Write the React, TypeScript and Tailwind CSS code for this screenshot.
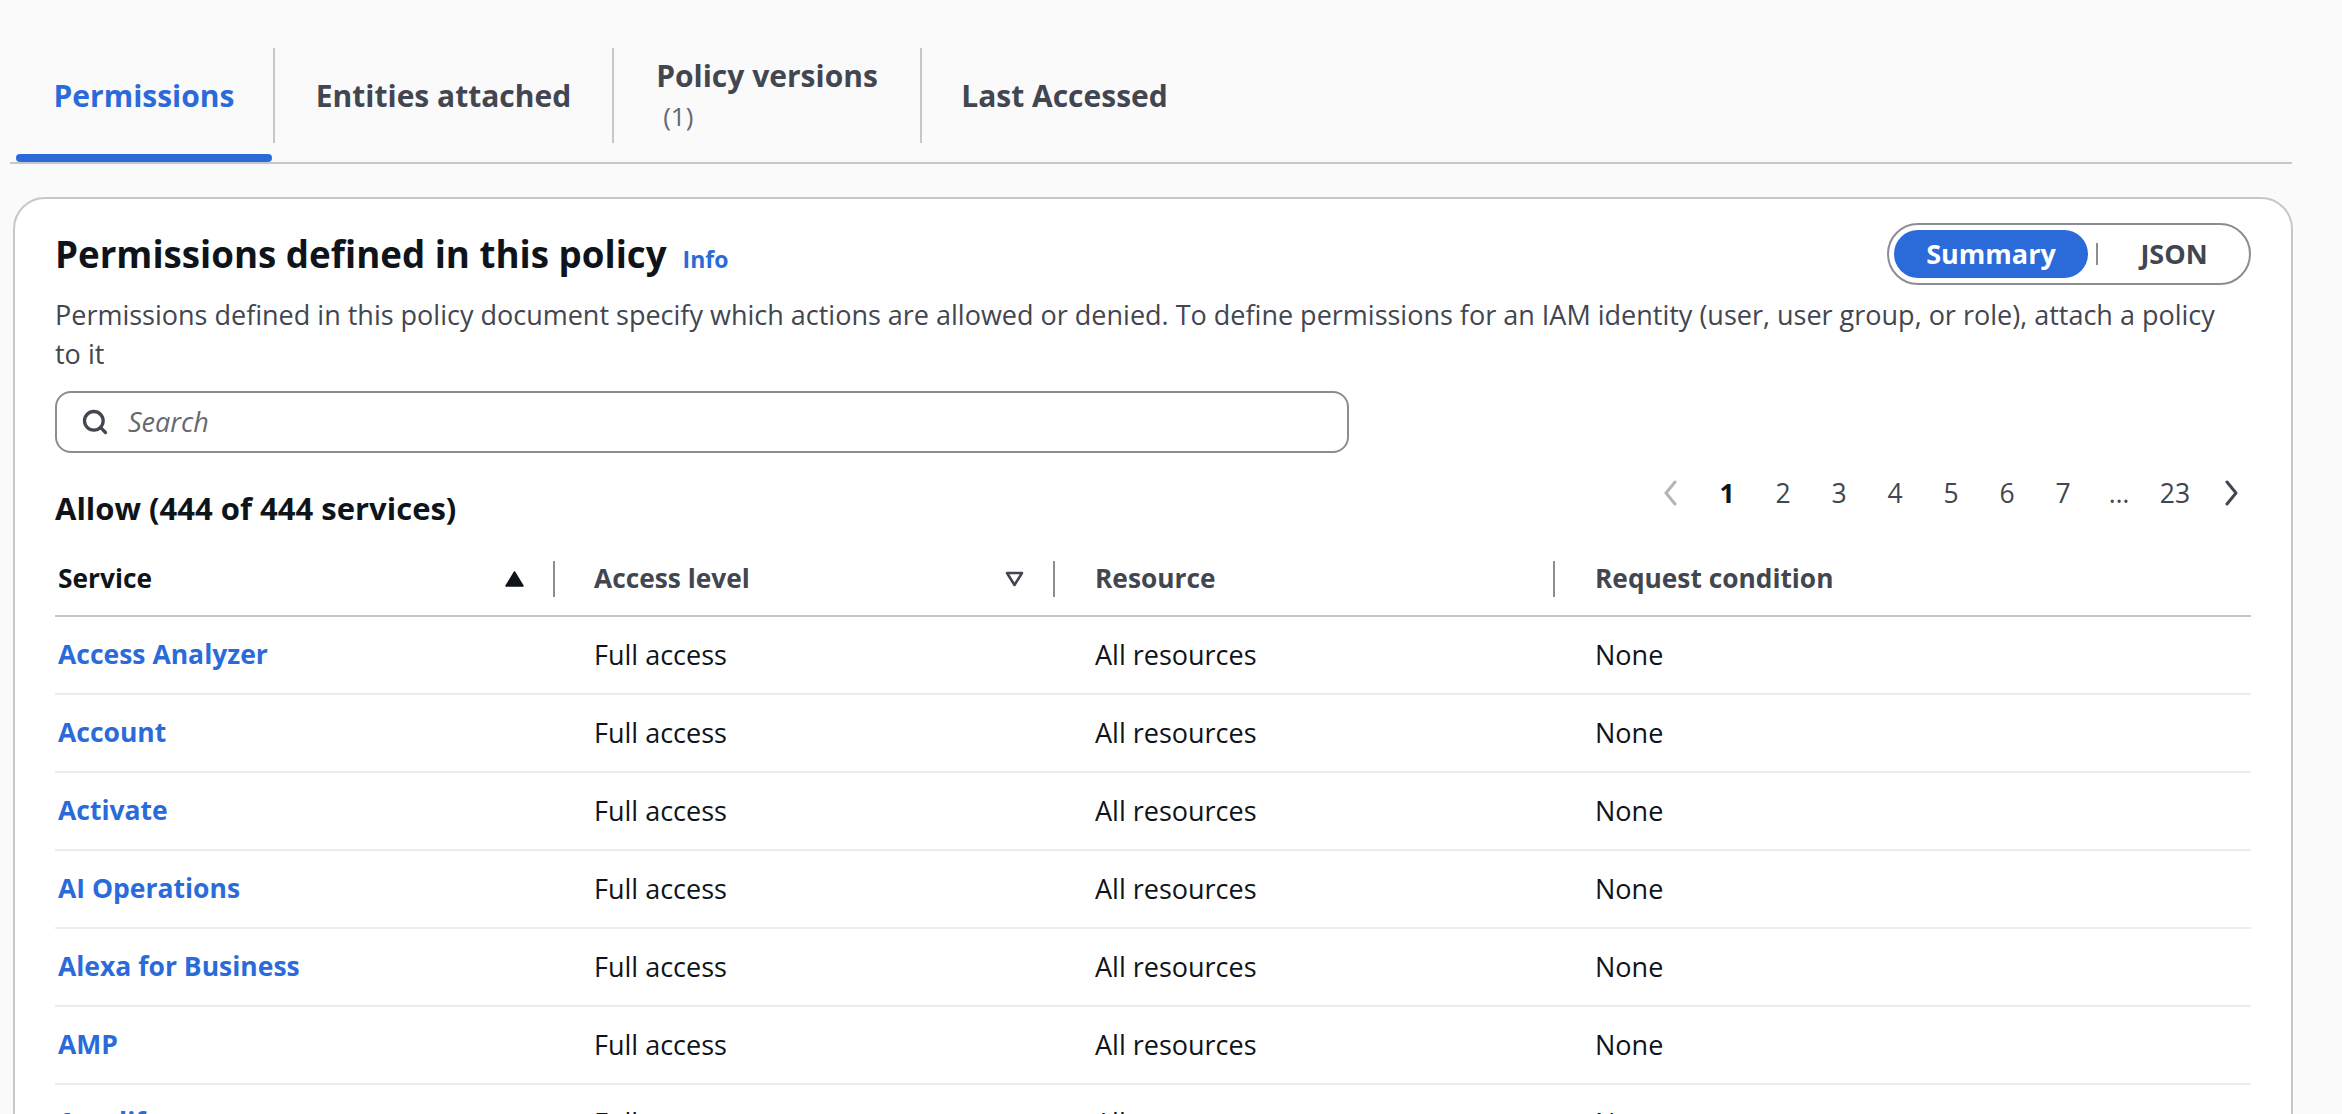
import { Search } from "lucide-react"

const services = [
  "Access Analyzer",
  "Account",
  "Activate",
  "AI Operations",
  "Alexa for Business",
  "AMP",
  "Amplify",
]

function TabDivider() {
  return <div className="w-[2px] h-[95px] bg-[#c6c6cd] self-start" />
}

function Tab({ width, active, children }: { width: string; active?: boolean; children: React.ReactNode }) {
  return (
    <div className={`flex flex-col ${width}`}>
      <div
        className={`h-[95px] flex items-center justify-center text-[30px] font-bold leading-[40px] ${
          active ? "text-[#2b6bd9]" : "text-[#424650]"
        }`}
      >
        {children}
      </div>
      <div className={`mt-[11px] h-[8px] rounded-full mx-[1px] ${active ? "bg-[#2b6bd9]" : ""}`} />
    </div>
  )
}

function SortUp() {
  return (
    <svg width="19" height="16" viewBox="0 0 19 16">
      <polygon points="9.5,1 18,15 1,15" fill="#0f141a" stroke="#0f141a" strokeWidth="1.5" strokeLinejoin="round" />
    </svg>
  )
}

function SortDown() {
  return (
    <svg width="19" height="16" viewBox="0 0 19 16">
      <polygon points="2,2 17,2 9.5,14" fill="none" stroke="#424650" strokeWidth="2.6" strokeLinejoin="round" />
    </svg>
  )
}

function Chevron({ dir, disabled }: { dir: "left" | "right"; disabled?: boolean }) {
  return (
    <svg width="20" height="26" viewBox="0 0 20 26">
      <polyline
        points={dir === "left" ? "14,2 5,13 14,24" : "6,2 15,13 6,24"}
        fill="none"
        stroke={disabled ? "#b4b4bb" : "#424650"}
        strokeWidth="3"
        strokeLinecap="round"
        strokeLinejoin="round"
      />
    </svg>
  )
}

function Pagination() {
  const pages = ["1", "2", "3", "4", "5", "6", "7", "...", "23"]
  return (
    <div className="flex items-center h-[40px] mr-[-8px] text-[26.5px]">
      <div className="w-[56px] flex justify-center">
        <Chevron dir="left" disabled />
      </div>
      {pages.map((p) => (
        <div
          key={p}
          className={`w-[56px] text-center leading-[40px] ${
            p === "1" ? "font-bold text-[#0f141a]" : "text-[#424650]"
          }`}
        >
          {p === "..." ? "…" : p}
        </div>
      ))}
      <div className="w-[56px] flex justify-center">
        <Chevron dir="right" />
      </div>
    </div>
  )
}

export default function App() {
  return (
    <div className="min-h-screen bg-[#fafafa] font-['Open_Sans','Liberation_Sans',sans-serif] pb-[40px]">
      {/* Tabs */}
      <div className="pl-[10px] pr-[50px] pt-[48px]">
        <div className="flex border-b-2 border-[#c6c6cd] pl-[5px]">
          <Tab width="w-[258px]" active>
            Permissions
          </Tab>
          <TabDivider />
          <Tab width="w-[337px]">Entities attached</Tab>
          <TabDivider />
          <Tab width="w-[306px]">
            <div className="flex flex-col">
              <span>Policy versions</span>
              <span className="pl-[7px] font-normal text-[26px] text-[#656871] leading-[40px]">(1)</span>
            </div>
          </Tab>
          <TabDivider />
          <Tab width="w-[285px]">Last Accessed</Tab>
        </div>
      </div>

      {/* Card */}
      <div className="ml-[13px] mr-[49px] mt-[33px] rounded-[32px] border-2 border-[#c6c6cd] bg-white px-[40px] pt-[24px] pb-[40px]">
        <div className="flex items-center justify-between h-[62px]">
          <div className="flex items-baseline gap-[16px]">
            <h2 className="text-[36.7px] font-bold text-[#0f141a] leading-[46px]">Permissions defined in this policy</h2>
            <span className="text-[23px] font-bold text-[#2b6bd9]">Info</span>
          </div>
          <div className="flex items-center w-[364px] h-[62px] rounded-full border-2 border-[#8c8c94] p-[5px]">
            <div className="w-[194px] h-[48px] rounded-full bg-[#2b6bd9] flex items-center justify-center text-white font-bold text-[27px]">
              Summary
            </div>
            <div className="ml-[8px] w-[2px] h-[22px] bg-[#8c8c94]" />
            <div className="flex-1 pl-[6px] text-center font-bold text-[27px] text-[#424650]">JSON</div>
          </div>
        </div>

        <p className="mt-[10px] text-[27px] leading-[39px] text-[#424650]">
          Permissions defined in this policy document specify which actions are allowed or denied. To define
          permissions for an IAM identity (user, user group, or role), attach a policy {"to\u00a0it"}
        </p>

        <div className="mt-[18px] w-[1294px] h-[62px] rounded-[16px] border-2 border-[#8c8c94] flex items-center pl-[24px] gap-[19px]">
          <Search className="w-[28px] h-[28px] text-[#424650]" strokeWidth={2.8} />
          <span className="italic text-[27px] text-[#656871]">Search</span>
        </div>

        <div className="mt-[20px] flex items-start justify-between">
          <div className="pt-[15px] leading-[40px] text-[31px] font-bold text-[#0f141a]">Allow (444 of 444 services)</div>
          <Pagination />
        </div>

        {/* Table */}
        <div className="mt-[15px]">
          <div className="grid grid-cols-[500px_500px_500px_1fr] h-[74px] items-center border-b-2 border-[#c6c6cd] text-[26.3px] font-bold">
            <div className="flex items-center">
              <span className="flex-1 pl-[3px] text-[#0f141a]">Service</span>
              <SortUp />
              <div className="ml-[29px] w-[2px] h-[36px] bg-[#8c8c94]" />
            </div>
            <div className="flex items-center">
              <span className="flex-1 pl-[39px] text-[#424650]">Access level</span>
              <SortDown />
              <div className="ml-[29px] w-[2px] h-[36px] bg-[#8c8c94]" />
            </div>
            <div className="flex items-center">
              <span className="flex-1 pl-[40px] text-[#424650]">Resource</span>
              <div className="w-[2px] h-[36px] bg-[#8c8c94]" />
            </div>
            <div className="pl-[40px] text-[#424650]">Request condition</div>
          </div>

          {services.map((s) => (
            <div
              key={s}
              className="grid grid-cols-[500px_500px_500px_1fr] h-[78px] items-center border-b-2 border-[#ebebf0] text-[27px] text-[#0f141a]"
            >
              <div className="pl-[3px] font-bold text-[26.5px] text-[#2b6bd9]">{s}</div>
              <div className="pl-[39px]">Full access</div>
              <div className="pl-[40px]">All resources</div>
              <div className="pl-[40px]">None</div>
            </div>
          ))}
        </div>
      </div>
    </div>
  )
}
